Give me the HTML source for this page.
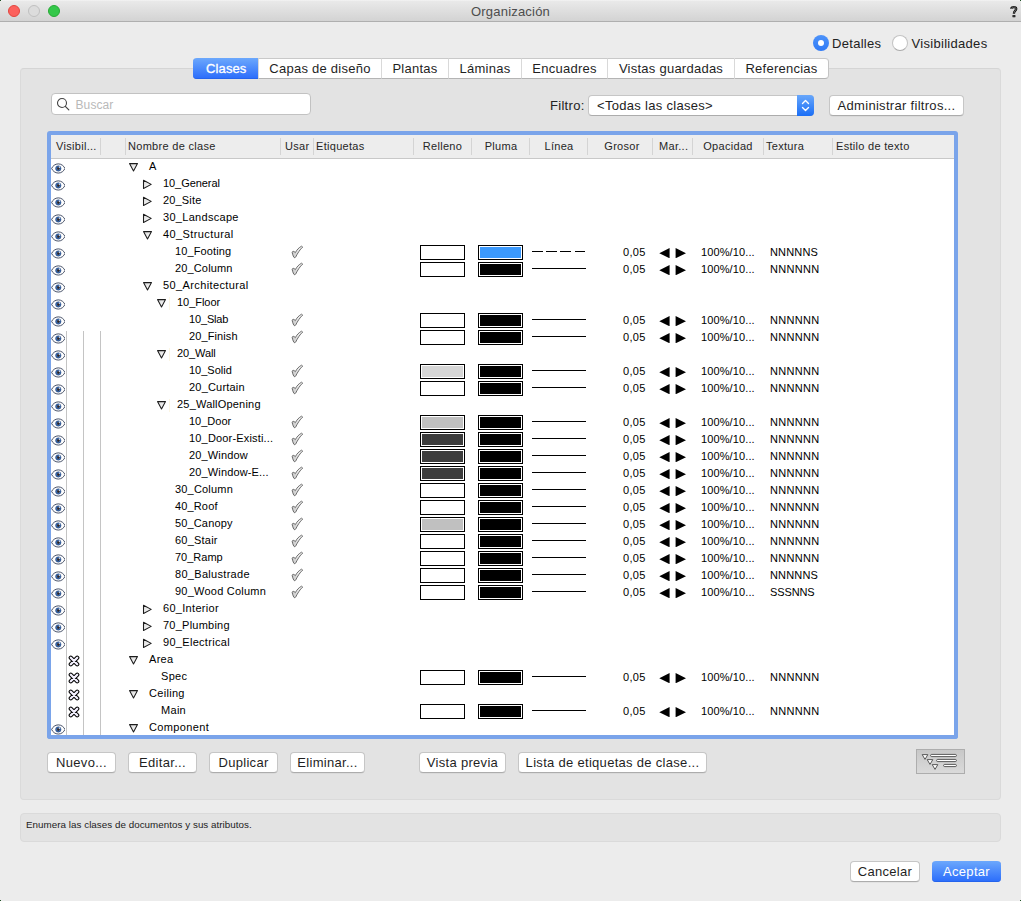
<!DOCTYPE html>
<html><head><meta charset="utf-8"><title>Organización</title>
<style>
*{box-sizing:border-box;margin:0;padding:0}
html,body{width:1021px;height:901px;overflow:hidden;background:#ececec}
body{font-family:"Liberation Sans", sans-serif;font-size:13px;color:#222;position:relative}
.abs,.ic,.rt,.ht,.hs,.sw,.ln,.tab,.btn{position:absolute}
#titlebar{left:0;top:0;width:1021px;height:22px;background:linear-gradient(#f4f4f4 0,#e9e9e9 1.5px,#d3d3d3 100%);border-bottom:1px solid #afafaf}
#title{left:0;width:1021px;top:4px;text-align:center;font-size:13px;color:#4d4d4d;letter-spacing:0.2px}
.tl{position:absolute;top:5px;width:12px;height:12px;border-radius:50%}
#group{left:20px;top:68px;width:981px;height:732px;background:#e3e3e3;border:1px solid #dadada;border-top-color:#d5d5d5;border-radius:4px}
#status{left:20px;top:813px;width:981px;height:29px;background:#e3e3e3;border:1px solid #dadada;border-radius:4px}
#statustxt{left:26px;top:819px;font-size:9.8px;color:#222;letter-spacing:0.04px}
.tab{top:58px;height:21px;background:#fff;border-top:1px solid #c9c9c9;border-bottom:1px solid #b4b4b4;border-left:1px solid #d9d9d9;text-align:center;line-height:19px;font-size:13px;color:#1f1f1f;letter-spacing:0.25px}
.tab.sel{background:linear-gradient(#6ca8fc,#2a6cfb);color:#fff;-webkit-text-stroke:0.3px #fff;border:0;line-height:21px;letter-spacing:0.1px;padding-left:1.5px;border-radius:4px 0 0 4px;box-shadow:inset 0 -0.5px 0 #1f5be0}
.tab.last{border-right:1px solid #c4c4c4;border-radius:0 4px 4px 0}
.btn{height:21px;background:#fff;border:1px solid #c6c6c6;border-bottom-color:#acacac;border-radius:4px;text-align:center;line-height:19px;font-size:13px;color:#1f1f1f;letter-spacing:0.3px;box-shadow:0 0.5px 0 rgba(0,0,0,0.08)}
.btn.def{background:linear-gradient(#6ca8fc,#2a6cfb);color:#fff;border:0;line-height:21px;box-shadow:inset 0 -0.5px 0 #1f5be0}
#search{left:51px;top:93px;width:260px;height:22px;background:#fff;border:1px solid #c2c2c2;border-radius:4px}
#popup{left:588px;top:95px;width:226px;height:21px;background:#fff;border:1px solid #c6c6c6;border-bottom-color:#acacac;border-radius:4px}
#popcap{right:-1px;top:-1px;width:17px;height:21px;background:linear-gradient(#68a7fb,#1a6ef6);border-radius:0 4px 4px 0}
#ring{left:47px;top:131px;width:911px;height:608px;background:#7aa4ea;border-radius:3px}
#table{left:51px;top:135px;width:903px;height:600px;background:#fff;overflow:hidden}
#thead{left:51px;top:135px;width:903px;height:24px;background:#ededed;border-bottom:1px solid #c8c8c8}
.ht{top:140px;font-size:11px;color:#262626;letter-spacing:0.3px;white-space:nowrap}
.ht.c{text-align:center}
.hs{top:138px;width:1px;height:17px;background:#d4d4d4}
.rt{font-size:11px;color:#000;letter-spacing:0.3px;white-space:nowrap;line-height:17px}
.sw{width:45px;height:15px;border:1px solid #000;background:#fff;padding:1px}
.sw i{display:block;width:100%;height:100%}
.ln{width:54px;height:1px;background:#000}
.ln.dash{background:repeating-linear-gradient(90deg,#000 0 10.6px,transparent 10.6px 14.2px)}
.vl{position:absolute;top:331px;width:1px;height:404px;background:#c4c4c4}
.radio{position:absolute;width:16px;height:16px;border-radius:50%}
</style></head><body>

<svg width="0" height="0" style="position:absolute">
<defs>
 <linearGradient id="tg" x1="0" y1="0" x2="1" y2="1"><stop offset="0" stop-color="#d8d8d8"/><stop offset="1" stop-color="#fff"/></linearGradient>
 <linearGradient id="cg" x1="0" y1="0" x2="1" y2="0"><stop offset="0" stop-color="#c4c4c4"/><stop offset="0.5" stop-color="#e4e4e4"/><stop offset="1" stop-color="#fff"/></linearGradient>
 <radialGradient id="iris" cx="50%" cy="50%" r="50%">
  <stop offset="0" stop-color="#35261c"/><stop offset="0.38" stop-color="#3a3640"/><stop offset="0.6" stop-color="#3d72b6"/><stop offset="1" stop-color="#28508c"/>
 </radialGradient>
 <symbol id="eye" viewBox="0 0 16 12">
  <path d="M0.7 6 C1.8 3.3 4.6 0.95 8 0.95 C11.4 0.95 14.2 3.3 15.3 6 C14.2 8.7 11.4 11.05 8 11.05 C4.6 11.05 1.8 8.7 0.7 6 Z" fill="#fff" stroke="#36415a" stroke-width="1.0"/>
  <circle cx="8" cy="6" r="3.0" fill="url(#iris)" stroke="#274a86" stroke-width="0.5"/>
  <circle cx="9.3" cy="4.6" r="0.9" fill="#e6eefa" opacity="0.85"/>
 </symbol>
 <symbol id="xx" viewBox="0 0 12 12">
  <path d="M2.8 2.8 L9.2 9.2 M9.2 2.8 L2.8 9.2" stroke="#000" stroke-width="4.3" stroke-linecap="round"/><path d="M2.8 2.8 L9.2 9.2 M9.2 2.8 L2.8 9.2" stroke="#f4f1ff" stroke-width="2.3" stroke-linecap="round"/>
 </symbol>
 <symbol id="chk" viewBox="0 0 14 14">
  <path d="M2.2 7.4 C2.4 6.0 4.0 5.9 5.3 7.7 C6.8 4.7 9.0 2.5 11.6 1.2 L12.7 2.0 C10.0 4.4 7.6 8.2 5.7 12.0 C5.1 12.9 4.2 12.9 3.7 12.0 C2.9 10.4 2.3 8.8 2.2 7.4 Z" fill="url(#cg)" stroke="#555" stroke-width="0.85" stroke-linejoin="round"/>
 </symbol>
 <symbol id="td" viewBox="0 0 11 11">
  <path d="M1.5 1.6 L9.5 1.6 L5.5 9.0 Z" fill="url(#tg)" stroke="#1c1c1c" stroke-width="1.05" stroke-linejoin="round"/>
 </symbol>
 <symbol id="tr" viewBox="0 0 11 11">
  <path d="M1.5 1.3 L1.5 9.5 L9.2 5.4 Z" fill="url(#tg)" stroke="#1c1c1c" stroke-width="1.05" stroke-linejoin="round"/>
 </symbol>
</defs>
</svg>

<div class="abs" id="titlebar"></div>
<div class="tl" style="left:8px;background:#fc615d;border:0.5px solid #e2463f"></div>
<div class="tl" style="left:28px;background:#dcdcdc;border:1px solid #c0c0c0"></div>
<div class="tl" style="left:48px;background:#34c84a;border:0.5px solid #27aa35"></div>
<div class="abs" style="left:0;top:0;width:1px;height:1px;background:#1f4f25"></div><div class="abs" style="left:1020px;top:0;width:1px;height:1px;background:#1f4f25"></div><div class="abs" style="left:0;top:900px;width:1px;height:1px;background:#1f4f25"></div><div class="abs" style="left:1020px;top:900px;width:1px;height:1px;background:#1f4f25"></div>
<div class="abs" id="title">Organización</div>
<svg class="ic" style="left:1009px;top:5px" width="10" height="13" viewBox="0 0 10 13"><path d="M2.3 3.7 C2.2 1.6 7.3 1.4 7.2 3.9 C7.1 5.7 4.9 6.2 4.9 8.7" fill="none" stroke="#0a0a0a" stroke-width="2.3" stroke-linecap="butt"/><path d="M2.3 3.6 C2.3 1.7 7.2 1.5 7.1 3.9 C7.0 5.6 4.9 6.3 4.9 8.4" fill="none" stroke="#b5b5b5" stroke-width="0.55"/><rect x="3.5" y="9.9" width="2.9" height="2.3" rx="0.5" fill="#0a0a0a"/><rect x="4.4" y="10.6" width="1.1" height="0.8" fill="#aaa"/></svg>

<div class="radio" style="left:813px;top:35px;background:linear-gradient(#4d93fa,#2f7af6)"><div style="position:absolute;left:5px;top:5px;width:6px;height:6px;border-radius:50%;background:#fff"></div></div>
<div class="abs" style="left:832px;top:36px;letter-spacing:0.3px">Detalles</div>
<div class="radio" style="left:892px;top:35px;background:#fff;border:1px solid #c3c3c3;border-bottom-color:#a9a9a9"></div>
<div class="abs" style="left:911.5px;top:36px;letter-spacing:0.3px">Visibilidades</div>

<div class="abs" id="group"></div>
<div class="tab sel" style="left:193px;width:65px">Clases</div>
<div class="tab" style="left:258px;width:123px">Capas de diseño</div>
<div class="tab" style="left:381px;width:67px">Plantas</div>
<div class="tab" style="left:448px;width:73px">Láminas</div>
<div class="tab" style="left:521px;width:86px">Encuadres</div>
<div class="tab" style="left:607px;width:127px">Vistas guardadas</div>
<div class="tab last" style="left:734px;width:95px">Referencias</div>

<div class="abs" id="search"></div>
<svg class="ic" style="left:56px;top:97px" width="14" height="14" viewBox="0 0 14 14"><circle cx="6.0" cy="6.0" r="4.5" fill="none" stroke="#444" stroke-width="1.1"/><path d="M9.3 9.3 L12.8 12.8" stroke="#444" stroke-width="1.2" stroke-linecap="round"/></svg>
<div class="abs" style="left:75.5px;top:98px;color:#b9b9b9;font-size:12px;letter-spacing:0.1px">Buscar</div>

<div class="abs" style="left:550px;top:98px;letter-spacing:0.3px">Filtro:</div>
<div class="abs" id="popup"><div class="abs" style="left:8px;top:2px;letter-spacing:0.3px">&lt;Todas las clases&gt;</div><div class="abs" id="popcap"><svg width="17" height="21" viewBox="0 0 17 21"><path d="M5.5 8.5 L8.5 5.5 L11.5 8.5 M5.5 12.5 L8.5 15.5 L11.5 12.5" fill="none" stroke="#fff" stroke-width="1.4" stroke-linecap="round" stroke-linejoin="round"/></svg></div></div>
<div class="btn" style="left:829px;top:95px;width:135px">Administrar filtros...</div>

<div class="abs" id="ring"></div>
<div class="abs" id="table"></div>
<div class="abs" id="thead"></div>
<span class="ht" style="left:56px">Visibil...</span>
<span class="ht" style="left:128px">Nombre de clase</span>
<span class="ht" style="left:285px">Usar</span>
<span class="ht" style="left:316px">Etiquetas</span>
<span class="ht c" style="left:414px;width:57px">Relleno</span>
<span class="ht c" style="left:472px;width:58px">Pluma</span>
<span class="ht c" style="left:531px;width:56px">Línea</span>
<span class="ht c" style="left:590px;width:64px">Grosor</span>
<span class="ht" style="left:659px">Mar...</span>
<span class="ht c" style="left:693px;width:70px">Opacidad</span>
<span class="ht" style="left:766px">Textura</span>
<span class="ht" style="left:836px">Estilo de texto</span>
<div class="hs" style="left:100px"></div>
<div class="hs" style="left:125px"></div>
<div class="hs" style="left:280px"></div>
<div class="hs" style="left:313px"></div>
<div class="hs" style="left:413px"></div>
<div class="hs" style="left:471px"></div>
<div class="hs" style="left:529px"></div>
<div class="hs" style="left:587px"></div>
<div class="hs" style="left:652px"></div>
<div class="hs" style="left:692px"></div>
<div class="hs" style="left:763px"></div>
<div class="hs" style="left:832px"></div>
<div class="vl" style="left:66px"></div><div class="vl" style="left:83px"></div><div class="vl" style="left:100px"></div>
<svg class="ic" style="left:50.65px;top:162.95px" width="14.6" height="10.95"><use href="#eye"/></svg>
<svg class="ic" style="left:128px;top:162px" width="11" height="11"><use href="#td"/></svg>
<span class="rt" style="left:149px;top:158px;letter-spacing:0.3px">A</span>
<svg class="ic" style="left:50.65px;top:179.95px" width="14.6" height="10.95"><use href="#eye"/></svg>
<svg class="ic" style="left:142px;top:179px" width="11" height="11"><use href="#tr"/></svg>
<span class="rt" style="left:163px;top:175px;letter-spacing:-0.06px">10_General</span>
<svg class="ic" style="left:50.65px;top:196.95px" width="14.6" height="10.95"><use href="#eye"/></svg>
<svg class="ic" style="left:142px;top:196px" width="11" height="11"><use href="#tr"/></svg>
<span class="rt" style="left:163px;top:192px;letter-spacing:0.171px">20_Site</span>
<svg class="ic" style="left:50.65px;top:213.95px" width="14.6" height="10.95"><use href="#eye"/></svg>
<svg class="ic" style="left:142px;top:213px" width="11" height="11"><use href="#tr"/></svg>
<span class="rt" style="left:163px;top:209px;letter-spacing:0.3px">30_Landscape</span>
<svg class="ic" style="left:50.65px;top:230.95px" width="14.6" height="10.95"><use href="#eye"/></svg>
<svg class="ic" style="left:142px;top:230px" width="11" height="11"><use href="#td"/></svg>
<span class="rt" style="left:163px;top:226px;letter-spacing:0.4px">40_Structural</span>
<svg class="ic" style="left:50.65px;top:247.95px" width="14.6" height="10.95"><use href="#eye"/></svg>
<span class="rt" style="left:175px;top:243px;letter-spacing:0.12px">10_Footing</span>
<svg class="ic" style="left:290px;top:245px" width="14" height="14"><use href="#chk"/></svg>
<div class="sw" style="left:420px;top:245px"></div>
<div class="sw" style="left:478px;top:245px"><i style="background:#3b99fc"></i></div>
<div class="ln dash" style="left:532px;top:251px"></div>
<span class="rt" style="left:623px;top:244px">0,05</span>
<svg class="ic" style="left:659px;top:247.6px" width="28" height="10.4"><path d="M0.3 5.2 L10.6 0.1 L10.6 10.3 Z M27 5.2 L16.6 0.1 L16.6 10.3 Z" fill="#000"/></svg>
<span class="rt" style="left:701px;top:244px;letter-spacing:0.12px">100%/10...</span>
<span class="rt" style="left:770px;top:244px;letter-spacing:0.18px">NNNNNS</span>
<svg class="ic" style="left:50.65px;top:264.95px" width="14.6" height="10.95"><use href="#eye"/></svg>
<span class="rt" style="left:175px;top:260px;letter-spacing:0.144px">20_Column</span>
<svg class="ic" style="left:290px;top:262px" width="14" height="14"><use href="#chk"/></svg>
<div class="sw" style="left:420px;top:262px"></div>
<div class="sw" style="left:478px;top:262px"><i style="background:#000"></i></div>
<div class="ln" style="left:532px;top:268px"></div>
<span class="rt" style="left:623px;top:261px">0,05</span>
<svg class="ic" style="left:659px;top:264.6px" width="28" height="10.4"><path d="M0.3 5.2 L10.6 0.1 L10.6 10.3 Z M27 5.2 L16.6 0.1 L16.6 10.3 Z" fill="#000"/></svg>
<span class="rt" style="left:701px;top:261px;letter-spacing:0.12px">100%/10...</span>
<span class="rt" style="left:770px;top:261px;letter-spacing:0.3px">NNNNNN</span>
<svg class="ic" style="left:50.65px;top:281.95px" width="14.6" height="10.95"><use href="#eye"/></svg>
<svg class="ic" style="left:142px;top:281px" width="11" height="11"><use href="#td"/></svg>
<span class="rt" style="left:163px;top:277px;letter-spacing:0.381px">50_Architectural</span>
<svg class="ic" style="left:50.65px;top:298.95px" width="14.6" height="10.95"><use href="#eye"/></svg>
<svg class="ic" style="left:156px;top:298px" width="11" height="11"><use href="#td"/></svg>
<div class="abs" style="left:169px;top:297px;width:1px;height:13px;background:#fcf6e4"></div>
<span class="rt" style="left:177px;top:294px;letter-spacing:-0.038px">10_Floor</span>
<svg class="ic" style="left:50.65px;top:315.95px" width="14.6" height="10.95"><use href="#eye"/></svg>
<span class="rt" style="left:189px;top:311px;letter-spacing:-0.157px">10_Slab</span>
<svg class="ic" style="left:290px;top:313px" width="14" height="14"><use href="#chk"/></svg>
<div class="sw" style="left:420px;top:313px"></div>
<div class="sw" style="left:478px;top:313px"><i style="background:#000"></i></div>
<div class="ln" style="left:532px;top:319px"></div>
<span class="rt" style="left:623px;top:312px">0,05</span>
<svg class="ic" style="left:659px;top:315.6px" width="28" height="10.4"><path d="M0.3 5.2 L10.6 0.1 L10.6 10.3 Z M27 5.2 L16.6 0.1 L16.6 10.3 Z" fill="#000"/></svg>
<span class="rt" style="left:701px;top:312px;letter-spacing:0.12px">100%/10...</span>
<span class="rt" style="left:770px;top:312px;letter-spacing:0.3px">NNNNNN</span>
<svg class="ic" style="left:50.65px;top:332.95px" width="14.6" height="10.95"><use href="#eye"/></svg>
<span class="rt" style="left:189px;top:328px;letter-spacing:0.1px">20_Finish</span>
<svg class="ic" style="left:290px;top:330px" width="14" height="14"><use href="#chk"/></svg>
<div class="sw" style="left:420px;top:330px"></div>
<div class="sw" style="left:478px;top:330px"><i style="background:#000"></i></div>
<div class="ln" style="left:532px;top:336px"></div>
<span class="rt" style="left:623px;top:329px">0,05</span>
<svg class="ic" style="left:659px;top:332.6px" width="28" height="10.4"><path d="M0.3 5.2 L10.6 0.1 L10.6 10.3 Z M27 5.2 L16.6 0.1 L16.6 10.3 Z" fill="#000"/></svg>
<span class="rt" style="left:701px;top:329px;letter-spacing:0.12px">100%/10...</span>
<span class="rt" style="left:770px;top:329px;letter-spacing:0.3px">NNNNNN</span>
<svg class="ic" style="left:50.65px;top:349.95px" width="14.6" height="10.95"><use href="#eye"/></svg>
<svg class="ic" style="left:156px;top:349px" width="11" height="11"><use href="#td"/></svg>
<div class="abs" style="left:169px;top:348px;width:1px;height:13px;background:#fcf6e4"></div>
<span class="rt" style="left:177px;top:345px;letter-spacing:-0.1px">20_Wall</span>
<svg class="ic" style="left:50.65px;top:366.95px" width="14.6" height="10.95"><use href="#eye"/></svg>
<span class="rt" style="left:189px;top:362px;letter-spacing:0.0px">10_Solid</span>
<svg class="ic" style="left:290px;top:364px" width="14" height="14"><use href="#chk"/></svg>
<div class="sw" style="left:420px;top:364px"><i style="background:#d6d6d6"></i></div>
<div class="sw" style="left:478px;top:364px"><i style="background:#000"></i></div>
<div class="ln" style="left:532px;top:370px"></div>
<span class="rt" style="left:623px;top:363px">0,05</span>
<svg class="ic" style="left:659px;top:366.6px" width="28" height="10.4"><path d="M0.3 5.2 L10.6 0.1 L10.6 10.3 Z M27 5.2 L16.6 0.1 L16.6 10.3 Z" fill="#000"/></svg>
<span class="rt" style="left:701px;top:363px;letter-spacing:0.12px">100%/10...</span>
<span class="rt" style="left:770px;top:363px;letter-spacing:0.3px">NNNNNN</span>
<svg class="ic" style="left:50.65px;top:383.95px" width="14.6" height="10.95"><use href="#eye"/></svg>
<span class="rt" style="left:189px;top:379px;letter-spacing:0.2px">20_Curtain</span>
<svg class="ic" style="left:290px;top:381px" width="14" height="14"><use href="#chk"/></svg>
<div class="sw" style="left:420px;top:381px"></div>
<div class="sw" style="left:478px;top:381px"><i style="background:#000"></i></div>
<div class="ln" style="left:532px;top:387px"></div>
<span class="rt" style="left:623px;top:380px">0,05</span>
<svg class="ic" style="left:659px;top:383.6px" width="28" height="10.4"><path d="M0.3 5.2 L10.6 0.1 L10.6 10.3 Z M27 5.2 L16.6 0.1 L16.6 10.3 Z" fill="#000"/></svg>
<span class="rt" style="left:701px;top:380px;letter-spacing:0.12px">100%/10...</span>
<span class="rt" style="left:770px;top:380px;letter-spacing:0.3px">NNNNNN</span>
<svg class="ic" style="left:50.65px;top:400.95px" width="14.6" height="10.95"><use href="#eye"/></svg>
<svg class="ic" style="left:156px;top:400px" width="11" height="11"><use href="#td"/></svg>
<div class="abs" style="left:169px;top:399px;width:1px;height:13px;background:#fcf6e4"></div>
<span class="rt" style="left:177px;top:396px;letter-spacing:0.2px">25_WallOpening</span>
<svg class="ic" style="left:50.65px;top:417.95px" width="14.6" height="10.95"><use href="#eye"/></svg>
<span class="rt" style="left:189px;top:413px;letter-spacing:0.0px">10_Door</span>
<svg class="ic" style="left:290px;top:415px" width="14" height="14"><use href="#chk"/></svg>
<div class="sw" style="left:420px;top:415px"><i style="background:#c0c0c0"></i></div>
<div class="sw" style="left:478px;top:415px"><i style="background:#000"></i></div>
<div class="ln" style="left:532px;top:421px"></div>
<span class="rt" style="left:623px;top:414px">0,05</span>
<svg class="ic" style="left:659px;top:417.6px" width="28" height="10.4"><path d="M0.3 5.2 L10.6 0.1 L10.6 10.3 Z M27 5.2 L16.6 0.1 L16.6 10.3 Z" fill="#000"/></svg>
<span class="rt" style="left:701px;top:414px;letter-spacing:0.12px">100%/10...</span>
<span class="rt" style="left:770px;top:414px;letter-spacing:0.3px">NNNNNN</span>
<svg class="ic" style="left:50.65px;top:434.95px" width="14.6" height="10.95"><use href="#eye"/></svg>
<span class="rt" style="left:189px;top:430px;letter-spacing:0.176px">10_Door-Existi...</span>
<svg class="ic" style="left:290px;top:432px" width="14" height="14"><use href="#chk"/></svg>
<div class="sw" style="left:420px;top:432px"><i style="background:#3d3d3d"></i></div>
<div class="sw" style="left:478px;top:432px"><i style="background:#000"></i></div>
<div class="ln" style="left:532px;top:438px"></div>
<span class="rt" style="left:623px;top:431px">0,05</span>
<svg class="ic" style="left:659px;top:434.6px" width="28" height="10.4"><path d="M0.3 5.2 L10.6 0.1 L10.6 10.3 Z M27 5.2 L16.6 0.1 L16.6 10.3 Z" fill="#000"/></svg>
<span class="rt" style="left:701px;top:431px;letter-spacing:0.12px">100%/10...</span>
<span class="rt" style="left:770px;top:431px;letter-spacing:0.3px">NNNNNN</span>
<svg class="ic" style="left:50.65px;top:451.95px" width="14.6" height="10.95"><use href="#eye"/></svg>
<span class="rt" style="left:189px;top:447px;letter-spacing:0.144px">20_Window</span>
<svg class="ic" style="left:290px;top:449px" width="14" height="14"><use href="#chk"/></svg>
<div class="sw" style="left:420px;top:449px"><i style="background:#3d3d3d"></i></div>
<div class="sw" style="left:478px;top:449px"><i style="background:#000"></i></div>
<div class="ln" style="left:532px;top:455px"></div>
<span class="rt" style="left:623px;top:448px">0,05</span>
<svg class="ic" style="left:659px;top:451.6px" width="28" height="10.4"><path d="M0.3 5.2 L10.6 0.1 L10.6 10.3 Z M27 5.2 L16.6 0.1 L16.6 10.3 Z" fill="#000"/></svg>
<span class="rt" style="left:701px;top:448px;letter-spacing:0.12px">100%/10...</span>
<span class="rt" style="left:770px;top:448px;letter-spacing:0.3px">NNNNNN</span>
<svg class="ic" style="left:50.65px;top:468.95px" width="14.6" height="10.95"><use href="#eye"/></svg>
<span class="rt" style="left:189px;top:464px;letter-spacing:0.143px">20_Window-E...</span>
<svg class="ic" style="left:290px;top:466px" width="14" height="14"><use href="#chk"/></svg>
<div class="sw" style="left:420px;top:466px"><i style="background:#3d3d3d"></i></div>
<div class="sw" style="left:478px;top:466px"><i style="background:#000"></i></div>
<div class="ln" style="left:532px;top:472px"></div>
<span class="rt" style="left:623px;top:465px">0,05</span>
<svg class="ic" style="left:659px;top:468.6px" width="28" height="10.4"><path d="M0.3 5.2 L10.6 0.1 L10.6 10.3 Z M27 5.2 L16.6 0.1 L16.6 10.3 Z" fill="#000"/></svg>
<span class="rt" style="left:701px;top:465px;letter-spacing:0.12px">100%/10...</span>
<span class="rt" style="left:770px;top:465px;letter-spacing:0.3px">NNNNNN</span>
<svg class="ic" style="left:50.65px;top:485.95px" width="14.6" height="10.95"><use href="#eye"/></svg>
<span class="rt" style="left:175px;top:481px;letter-spacing:0.189px">30_Column</span>
<svg class="ic" style="left:290px;top:483px" width="14" height="14"><use href="#chk"/></svg>
<div class="sw" style="left:420px;top:483px"></div>
<div class="sw" style="left:478px;top:483px"><i style="background:#000"></i></div>
<div class="ln" style="left:532px;top:489px"></div>
<span class="rt" style="left:623px;top:482px">0,05</span>
<svg class="ic" style="left:659px;top:485.6px" width="28" height="10.4"><path d="M0.3 5.2 L10.6 0.1 L10.6 10.3 Z M27 5.2 L16.6 0.1 L16.6 10.3 Z" fill="#000"/></svg>
<span class="rt" style="left:701px;top:482px;letter-spacing:0.12px">100%/10...</span>
<span class="rt" style="left:770px;top:482px;letter-spacing:0.3px">NNNNNN</span>
<svg class="ic" style="left:50.65px;top:502.95px" width="14.6" height="10.95"><use href="#eye"/></svg>
<span class="rt" style="left:175px;top:498px;letter-spacing:0.143px">40_Roof</span>
<svg class="ic" style="left:290px;top:500px" width="14" height="14"><use href="#chk"/></svg>
<div class="sw" style="left:420px;top:500px"></div>
<div class="sw" style="left:478px;top:500px"><i style="background:#000"></i></div>
<div class="ln" style="left:532px;top:506px"></div>
<span class="rt" style="left:623px;top:499px">0,05</span>
<svg class="ic" style="left:659px;top:502.6px" width="28" height="10.4"><path d="M0.3 5.2 L10.6 0.1 L10.6 10.3 Z M27 5.2 L16.6 0.1 L16.6 10.3 Z" fill="#000"/></svg>
<span class="rt" style="left:701px;top:499px;letter-spacing:0.12px">100%/10...</span>
<span class="rt" style="left:770px;top:499px;letter-spacing:0.3px">NNNNNN</span>
<svg class="ic" style="left:50.65px;top:519.95px" width="14.6" height="10.95"><use href="#eye"/></svg>
<span class="rt" style="left:175px;top:515px;letter-spacing:0.144px">50_Canopy</span>
<svg class="ic" style="left:290px;top:517px" width="14" height="14"><use href="#chk"/></svg>
<div class="sw" style="left:420px;top:517px"><i style="background:#c0c0c0"></i></div>
<div class="sw" style="left:478px;top:517px"><i style="background:#000"></i></div>
<div class="ln" style="left:532px;top:523px"></div>
<span class="rt" style="left:623px;top:516px">0,05</span>
<svg class="ic" style="left:659px;top:519.6px" width="28" height="10.4"><path d="M0.3 5.2 L10.6 0.1 L10.6 10.3 Z M27 5.2 L16.6 0.1 L16.6 10.3 Z" fill="#000"/></svg>
<span class="rt" style="left:701px;top:516px;letter-spacing:0.12px">100%/10...</span>
<span class="rt" style="left:770px;top:516px;letter-spacing:0.3px">NNNNNN</span>
<svg class="ic" style="left:50.65px;top:536.95px" width="14.6" height="10.95"><use href="#eye"/></svg>
<span class="rt" style="left:175px;top:532px;letter-spacing:0.212px">60_Stair</span>
<svg class="ic" style="left:290px;top:534px" width="14" height="14"><use href="#chk"/></svg>
<div class="sw" style="left:420px;top:534px"></div>
<div class="sw" style="left:478px;top:534px"><i style="background:#000"></i></div>
<div class="ln" style="left:532px;top:540px"></div>
<span class="rt" style="left:623px;top:533px">0,05</span>
<svg class="ic" style="left:659px;top:536.6px" width="28" height="10.4"><path d="M0.3 5.2 L10.6 0.1 L10.6 10.3 Z M27 5.2 L16.6 0.1 L16.6 10.3 Z" fill="#000"/></svg>
<span class="rt" style="left:701px;top:533px;letter-spacing:0.12px">100%/10...</span>
<span class="rt" style="left:770px;top:533px;letter-spacing:0.3px">NNNNNN</span>
<svg class="ic" style="left:50.65px;top:553.95px" width="14.6" height="10.95"><use href="#eye"/></svg>
<span class="rt" style="left:175px;top:549px;letter-spacing:0.0px">70_Ramp</span>
<svg class="ic" style="left:290px;top:551px" width="14" height="14"><use href="#chk"/></svg>
<div class="sw" style="left:420px;top:551px"></div>
<div class="sw" style="left:478px;top:551px"><i style="background:#000"></i></div>
<div class="ln" style="left:532px;top:557px"></div>
<span class="rt" style="left:623px;top:550px">0,05</span>
<svg class="ic" style="left:659px;top:553.6px" width="28" height="10.4"><path d="M0.3 5.2 L10.6 0.1 L10.6 10.3 Z M27 5.2 L16.6 0.1 L16.6 10.3 Z" fill="#000"/></svg>
<span class="rt" style="left:701px;top:550px;letter-spacing:0.12px">100%/10...</span>
<span class="rt" style="left:770px;top:550px;letter-spacing:0.3px">NNNNNN</span>
<svg class="ic" style="left:50.65px;top:570.95px" width="14.6" height="10.95"><use href="#eye"/></svg>
<span class="rt" style="left:175px;top:566px;letter-spacing:0.3px">80_Balustrade</span>
<svg class="ic" style="left:290px;top:568px" width="14" height="14"><use href="#chk"/></svg>
<div class="sw" style="left:420px;top:568px"></div>
<div class="sw" style="left:478px;top:568px"><i style="background:#000"></i></div>
<div class="ln" style="left:532px;top:574px"></div>
<span class="rt" style="left:623px;top:567px">0,05</span>
<svg class="ic" style="left:659px;top:570.6px" width="28" height="10.4"><path d="M0.3 5.2 L10.6 0.1 L10.6 10.3 Z M27 5.2 L16.6 0.1 L16.6 10.3 Z" fill="#000"/></svg>
<span class="rt" style="left:701px;top:567px;letter-spacing:0.12px">100%/10...</span>
<span class="rt" style="left:770px;top:567px;letter-spacing:0.18px">NNNNNS</span>
<svg class="ic" style="left:50.65px;top:587.95px" width="14.6" height="10.95"><use href="#eye"/></svg>
<span class="rt" style="left:175px;top:583px;letter-spacing:0.229px">90_Wood Column</span>
<svg class="ic" style="left:290px;top:585px" width="14" height="14"><use href="#chk"/></svg>
<div class="sw" style="left:420px;top:585px"></div>
<div class="sw" style="left:478px;top:585px"><i style="background:#000"></i></div>
<div class="ln" style="left:532px;top:591px"></div>
<span class="rt" style="left:623px;top:584px">0,05</span>
<svg class="ic" style="left:659px;top:587.6px" width="28" height="10.4"><path d="M0.3 5.2 L10.6 0.1 L10.6 10.3 Z M27 5.2 L16.6 0.1 L16.6 10.3 Z" fill="#000"/></svg>
<span class="rt" style="left:701px;top:584px;letter-spacing:0.12px">100%/10...</span>
<span class="rt" style="left:770px;top:584px;letter-spacing:-0.12px">SSSNNS</span>
<svg class="ic" style="left:50.65px;top:604.95px" width="14.6" height="10.95"><use href="#eye"/></svg>
<svg class="ic" style="left:142px;top:604px" width="11" height="11"><use href="#tr"/></svg>
<span class="rt" style="left:163px;top:600px;letter-spacing:0.3px">60_Interior</span>
<svg class="ic" style="left:50.65px;top:621.95px" width="14.6" height="10.95"><use href="#eye"/></svg>
<svg class="ic" style="left:142px;top:621px" width="11" height="11"><use href="#tr"/></svg>
<span class="rt" style="left:163px;top:617px;letter-spacing:0.236px">70_Plumbing</span>
<svg class="ic" style="left:50.65px;top:638.95px" width="14.6" height="10.95"><use href="#eye"/></svg>
<svg class="ic" style="left:142px;top:638px" width="11" height="11"><use href="#tr"/></svg>
<span class="rt" style="left:163px;top:634px;letter-spacing:0.3px">90_Electrical</span>
<svg class="ic" style="left:68px;top:655.2px" width="12" height="12"><use href="#xx"/></svg>
<svg class="ic" style="left:128px;top:655px" width="11" height="11"><use href="#td"/></svg>
<span class="rt" style="left:149px;top:651px;letter-spacing:0.3px">Area</span>
<svg class="ic" style="left:68px;top:672.2px" width="12" height="12"><use href="#xx"/></svg>
<span class="rt" style="left:161px;top:668px;letter-spacing:0.3px">Spec</span>
<div class="sw" style="left:420px;top:670px"></div>
<div class="sw" style="left:478px;top:670px"><i style="background:#000"></i></div>
<div class="ln" style="left:532px;top:676px"></div>
<span class="rt" style="left:623px;top:669px">0,05</span>
<svg class="ic" style="left:659px;top:672.6px" width="28" height="10.4"><path d="M0.3 5.2 L10.6 0.1 L10.6 10.3 Z M27 5.2 L16.6 0.1 L16.6 10.3 Z" fill="#000"/></svg>
<span class="rt" style="left:701px;top:669px;letter-spacing:0.12px">100%/10...</span>
<span class="rt" style="left:770px;top:669px;letter-spacing:0.3px">NNNNNN</span>
<svg class="ic" style="left:68px;top:689.2px" width="12" height="12"><use href="#xx"/></svg>
<svg class="ic" style="left:128px;top:689px" width="11" height="11"><use href="#td"/></svg>
<span class="rt" style="left:149px;top:685px;letter-spacing:0.3px">Ceiling</span>
<svg class="ic" style="left:68px;top:706.2px" width="12" height="12"><use href="#xx"/></svg>
<span class="rt" style="left:161px;top:702px;letter-spacing:0.3px">Main</span>
<div class="sw" style="left:420px;top:704px"></div>
<div class="sw" style="left:478px;top:704px"><i style="background:#000"></i></div>
<div class="ln" style="left:532px;top:710px"></div>
<span class="rt" style="left:623px;top:703px">0,05</span>
<svg class="ic" style="left:659px;top:706.6px" width="28" height="10.4"><path d="M0.3 5.2 L10.6 0.1 L10.6 10.3 Z M27 5.2 L16.6 0.1 L16.6 10.3 Z" fill="#000"/></svg>
<span class="rt" style="left:701px;top:703px;letter-spacing:0.12px">100%/10...</span>
<span class="rt" style="left:770px;top:703px;letter-spacing:0.3px">NNNNNN</span>
<svg class="ic" style="left:50.65px;top:723.95px" width="14.6" height="10.95"><use href="#eye"/></svg>
<svg class="ic" style="left:128px;top:723px" width="11" height="11"><use href="#td"/></svg>
<span class="rt" style="left:149px;top:719px;letter-spacing:0.378px">Component</span>
<div class="abs" style="left:47px;top:735px;width:911px;height:4px;background:#7aa4ea;border-radius:0 0 3px 3px"></div>

<div class="btn" style="left:47px;top:752px;width:69px">Nuevo...</div>
<div class="btn" style="left:128px;top:752px;width:69px">Editar...</div>
<div class="btn" style="left:209px;top:752px;width:69px">Duplicar</div>
<div class="btn" style="left:290px;top:752px;width:75px">Eliminar...</div>
<div class="btn" style="left:419px;top:752px;width:87px">Vista previa</div>
<div class="btn" style="left:518px;top:752px;width:189px">Lista de etiquetas de clase...</div>

<div class="abs" style="left:916px;top:749px;width:49px;height:25px;background:linear-gradient(#c8c8c8,#dadada);border:1px solid #adadad"></div>
<svg class="ic" style="left:916px;top:749px" width="49" height="25" viewBox="0 0 49 25">
 <g fill="#fff" stroke="#4a4a4a" stroke-width="0.9" stroke-linejoin="round">
  <path d="M6.2 5.6 L11.8 5.6 L9 10.4 Z"/><path d="M11.2 10.6 L16.8 10.6 L14 15.4 Z"/><path d="M16.2 15.6 L21.8 15.6 L19 20.4 Z"/>
  <rect x="14.6" y="5.4" width="25.8" height="2.2" rx="1.1"/><rect x="20.6" y="10.4" width="19.8" height="2.2" rx="1.1"/><rect x="27.6" y="15.4" width="12.8" height="2.2" rx="1.1"/>
 </g>
</svg>

<div class="abs" id="status"></div>
<div class="abs" id="statustxt">Enumera las clases de documentos y sus atributos.</div>

<div class="btn" style="left:850px;top:861px;width:70px">Cancelar</div>
<div class="btn def" style="left:932px;top:861px;width:69px">Aceptar</div>
</body></html>
